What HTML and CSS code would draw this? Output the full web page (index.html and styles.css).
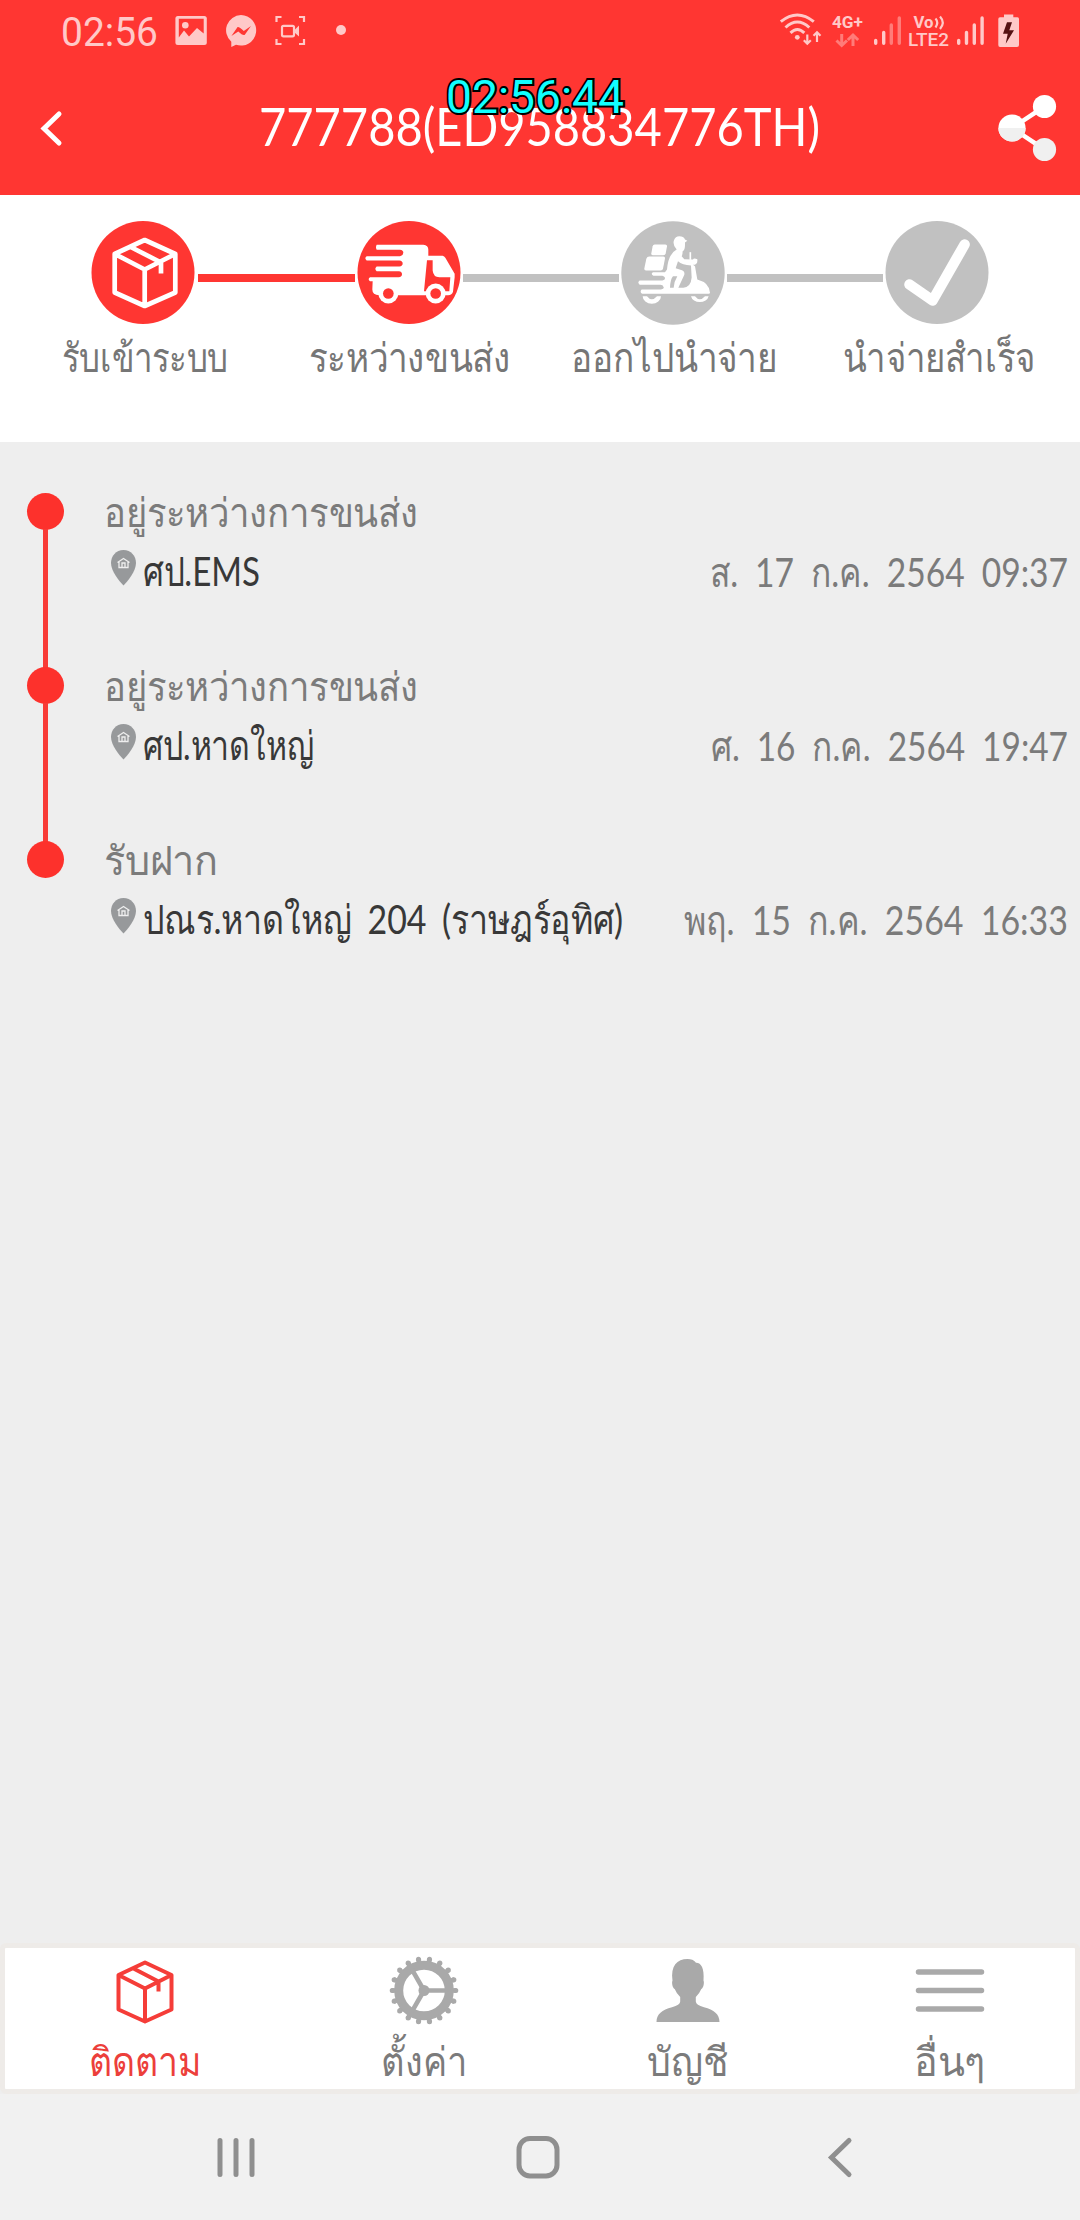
FILE: index.html
```
<!DOCTYPE html>
<html lang="th">
<head>
    <meta charset="UTF-8">
    <title>Track</title>
    <link rel="stylesheet" href="styles.css">
</head>
<body>
    <div class="statusbar">
        <svg class="time" width="97" height="34"><text x="0" y="33" textLength="97" lengthAdjust="spacingAndGlyphs">02:56</text></svg>
        <svg class="gallery" width="34" height="34">
            <rect x="1.4" y="3" width="31.4" height="29" rx="2.5"/>
            <path class="cut" d="M4.8 5.7H29.7V20.5L23 15L15 23.5L10 17.5L4.8 24.5Z"/>
            <circle cx="11.3" cy="12.3" r="3.3"/>
        </svg>
        <svg class="messenger" width="34" height="34">
            <path d="M17 2A15.3 15.3 0 1 1 12 31.8L7.3 34V28.8A15.3 15.3 0 0 1 17 2Z"/>
            <path class="cut" d="M7.4 23L13.6 14Q15 13.4 19.8 18L27 13L20.8 21.7Q19 23 14.3 18.4Z"/>
        </svg>
        <svg class="recorder" width="34" height="34">
            <path class="line2" d="M2.5 9V4H7.5M25 4H30V9M30 26V31H25M7.5 31H2.5V26"/>
            <rect class="line2" x="8" y="12.8" width="12" height="10.5" rx="1.5"/>
            <path d="M20.5 17L25 12.5V23.5L20.5 19.5Z"/>
        </svg>
        <svg class="more" width="10" height="34"><circle cx="5" cy="17" r="5"/></svg>
        <div class="status-right">
            <svg width="43" height="34">
                <path class="line3" d="M1.8 8.7Q18.3 -4.7 34.8 8.7M6.5 14.5Q18.3 3.5 30.3 14.5M11.5 19.8Q18.3 13.2 25.3 19.8"/>
                <circle cx="18.3" cy="24.3" r="2.4"/>
                <path class="line2" d="M28.3 21.5V30.5M24.8 27.3L28.3 30.8L31.8 27.3M38 29V19.5M34.5 22.8L38 19.3L41.5 22.8"/>
            </svg>
            <svg width="35" height="34">
                <text class="net" x="2" y="15" textLength="31" lengthAdjust="spacingAndGlyphs">4G+</text>
                <path class="line3 dim" d="M11.7 21V32M6.5 27.5L11.7 32.5L17 27.5M23 33V22.5M17.8 27L23 22L28.2 27"/>
            </svg>
            <svg width="28" height="34">
                <path class="bar" d="M2.7 27.5V30.3M10.7 19.5V30.3"/>
                <path class="bar dim" d="M18.3 12V30.3M26.3 5V30.3"/>
            </svg>
            <svg width="39" height="34">
                <text class="net" x="4.5" y="15.3" textLength="20" lengthAdjust="spacingAndGlyphs">Vo</text>
                <path class="line2" d="M26.5 5.5Q30 9.5 26.5 14.5M31 3.5Q36.5 9.5 31 16"/>
                <text class="net lte" x="-1" y="32.7" textLength="41" lengthAdjust="spacingAndGlyphs">LTE2</text>
            </svg>
            <svg width="28" height="34">
                <path class="bar" d="M2.7 27.5V30.3M10.5 19.5V30.3M18.3 12V30.3M26.1 5V30.3"/>
            </svg>
            <svg width="28" height="34">
                <path d="M12 1.5H21.3V4.3H25.5Q27 4.3 27 6V32Q27 34 25 34H8Q6.3 34 6.3 32V6Q6.3 4.3 8 4.3H12Z"/>
                <path class="bolt" d="M15 9.3L11 20.7H15.7L13.7 30.7L22 17.3H17.3L20 9.3Z"/>
            </svg>
        </div>
    </div>

    <div class="header">
        <svg class="back" width="26" height="40"><path d="M21 5L6 19.5L21 34"/></svg>
        <svg class="title" width="562" height="60"><text x="0" y="48" textLength="561" lengthAdjust="spacingAndGlyphs">777788(ED958834776TH)</text></svg>
        <svg class="share" width="60" height="70">
            <path class="arms" d="M46.5 13.5L14 35L46.5 56.5"/>
            <circle cx="46.5" cy="13.5" r="11.6"/>
            <circle cx="14" cy="35" r="13.6"/>
            <path class="shade" d="M.4 35A13.6 13.6 0 0 0 27.6 35Z"/>
            <circle class="shade" cx="46.5" cy="56.5" r="11.6"/>
        </svg>
    </div>
    <svg class="clock" width="184" height="48"><text x="3" y="40" textLength="178" lengthAdjust="spacingAndGlyphs">02:56:44</text></svg>

    <div class="steps">
        <div class="track">
            <svg class="step done" width="104" height="104">
                <circle cx="52" cy="51.5" r="51.5"/>
                <path class="outline" d="M53.7 19L84.3 33V71.5L53.7 85L23.7 71.5V33ZM23.7 33L53.7 48.5L84.3 33M53.7 48.5V85M40.7 26.5L70 41.5V52.5"/>
            </svg>
            <div class="line done"></div>
            <svg class="step done" width="104" height="104">
                <circle cx="52" cy="51.5" r="51.5"/>
                <g transform="translate(-7 -6.5) scale(.3333)">
                    <path class="white" d="M80 91H220Q235 92 235 106V124H278Q283 125 286 130L314 178V188L309 232Q306 243 292 242H88Q67 242 67 225L68 200H60Q52 195 60 188H146Q156 187 156 179Q156 171 147 170H80Q72 163 80 156H148Q158 155 158 147Q158 139 148 138H50Q42 131 50 125H150Q160 123 160 115Q160 107 150 106H80Q76 98 80 91Z"/>
                    <path class="fill" d="M231 137H248V168Q250 188 268 188H301L298 230H222Z"/>
                    <circle class="white" cx="115" cy="237" r="30"/><circle class="fill" cx="115" cy="237" r="16"/>
                    <circle class="white" cx="257" cy="237" r="30"/><circle class="fill" cx="257" cy="237" r="16"/>
                </g>
            </svg>
            <div class="line"></div>
            <svg class="step" width="104" height="104">
                <circle cx="52" cy="52" r="51.7"/>
                <g class="white" transform="translate(-6 -5.5) scale(.3333)">
                    <path d="M119 87H151Q157 87 156 93L152 114Q151 119 145 119H113Q108 119 109 113L113 92Q114 87 119 87Z"/>
                    <path d="M103 123H145Q151 123 150 129L144 160Q143 165 137 165H93Q87 165 88 159L94 130Q96 123 103 123Z"/>
                    <path d="M193 62Q206 62 210 72L217 76L210 81Q211 105 203 107Q203 118 200 122L208 131L234 132Q236 127 247 131Q249 148 234 148L240 152L247 192Q284 202 285 232Q285 235 281 235H82Q73 230 80 222H138Q148 220 146 215Q144 208 136 208H74Q66 201 74 195H142Q151 193 150 187Q148 182 142 181H115Q106 175 114 170H150L156 162Q160 115 185 102Q172 88 177 74Q181 62 193 62Z"/>
                    <path class="stroke" d="M226 133V110"/>
                    <path class="gap" d="M189 137Q202 148 228 150L230 186Q228 214 205 217H190L208 178Q210 168 201 164L182 158Z"/>
                    <path class="gap" d="M165 217Q166 190 174 182H187Q177 198 176 217Z"/>
                    <path d="M83 242A27 22 0 0 0 138 242H126Q110 260 96 242Z"/>
                    <path d="M228 242A27 22 0 0 0 281 242H270Q254 260 240 242Z"/>
                </g>
            </svg>
            <div class="line"></div>
            <svg class="step" width="104" height="104">
                <circle cx="52" cy="51.5" r="51.5"/>
                <path class="check" d="M24.5 63.5L47.6 79.5L79.6 23.5"/>
            </svg>
        </div>
        <div class="labels">
            <svg width="166" height="60"><text x="0" y="43" textLength="166" lengthAdjust="spacingAndGlyphs">รับเข้าระบบ</text></svg>
            <svg width="202" height="60"><text x="0" y="43" textLength="202" lengthAdjust="spacingAndGlyphs">ระหว่างขนส่ง</text></svg>
            <svg width="206" height="60"><text x="0" y="43" textLength="206" lengthAdjust="spacingAndGlyphs">ออกไปนำจ่าย</text></svg>
            <svg width="192" height="60"><text x="0" y="43" textLength="192" lengthAdjust="spacingAndGlyphs">นำจ่ายสำเร็จ</text></svg>
        </div>
    </div>

    <div class="timeline">
        <div class="event">
            <div class="rail"><div class="dot"></div><div class="stem"></div></div>
            <div class="detail">
                <svg class="status" width="316" height="50"><text x="-1" y="34" textLength="314" lengthAdjust="spacingAndGlyphs">อยู่ระหว่างการขนส่ง</text></svg>
                <div class="row">
                    <svg class="pin" width="25" height="50"><path d="M12.5 7C5 7 0 13 0 20C0 28 8 38 12.5 42.5C17 38 25 28 25 20C25 13 20 7 12.5 7Z"/><path class="house" d="M6.5 19.5L12.5 15.5L18.5 19.5M8 19V24.5H17V19M11 24V20H14V24"/></svg>
                    <svg class="place" width="117" height="50"><text x="-1" y="43" textLength="117" lengthAdjust="spacingAndGlyphs">ศป.EMS</text></svg>
                    <svg class="date" width="358" height="50"><text x="0" y="43.5" textLength="358" lengthAdjust="spacingAndGlyphs">ส. 17 ก.ค. 2564 09:37</text></svg>
                </div>
            </div>
        </div>
        <div class="event">
            <div class="rail"><div class="dot"></div><div class="stem"></div></div>
            <div class="detail">
                <svg class="status" width="316" height="50"><text x="-1" y="34" textLength="314" lengthAdjust="spacingAndGlyphs">อยู่ระหว่างการขนส่ง</text></svg>
                <div class="row">
                    <svg class="pin" width="25" height="50"><path d="M12.5 7C5 7 0 13 0 20C0 28 8 38 12.5 42.5C17 38 25 28 25 20C25 13 20 7 12.5 7Z"/><path class="house" d="M6.5 19.5L12.5 15.5L18.5 19.5M8 19V24.5H17V19M11 24V20H14V24"/></svg>
                    <svg class="place" width="171" height="50"><text x="-1" y="43" textLength="171" lengthAdjust="spacingAndGlyphs">ศป.หาดใหญ่</text></svg>
                    <svg class="date" width="357" height="50"><text x="0" y="43.5" textLength="357" lengthAdjust="spacingAndGlyphs">ศ. 16 ก.ค. 2564 19:47</text></svg>
                </div>
            </div>
        </div>
        <div class="event">
            <div class="rail"><div class="dot"></div></div>
            <div class="detail">
                <svg class="status" width="116" height="50"><text x="-1" y="34" textLength="114" lengthAdjust="spacingAndGlyphs">รับฝาก</text></svg>
                <div class="row">
                    <svg class="pin" width="25" height="50"><path d="M12.5 7C5 7 0 13 0 20C0 28 8 38 12.5 42.5C17 38 25 28 25 20C25 13 20 7 12.5 7Z"/><path class="house" d="M6.5 19.5L12.5 15.5L18.5 19.5M8 19V24.5H17V19M11 24V20H14V24"/></svg>
                    <svg class="place" width="479" height="50"><text x="-1" y="43" textLength="480" lengthAdjust="spacingAndGlyphs">ปณร.หาดใหญ่ 204 (ราษฎร์อุทิศ)</text></svg>
                    <svg class="date" width="384" height="50"><text x="0" y="43.5" textLength="384" lengthAdjust="spacingAndGlyphs">พฤ. 15 ก.ค. 2564 16:33</text></svg>
                </div>
            </div>
        </div>
    </div>

    <div class="tabs">
        <div class="tab active">
            <svg class="icon" width="72" height="72">
                <path class="outline" d="M36 8.5L62.5 21V55.5L36 67.5L9.5 55.5V21ZM9.5 21L36 34.5L62.5 21M36 34.5V67.5M24.5 14.5L49.5 27.5V37.5"/>
            </svg>
            <svg width="112" height="55"><text x="0" y="50" textLength="112" lengthAdjust="spacingAndGlyphs">ติดตาม</text></svg>
        </div>
        <div class="tab">
            <svg class="icon" width="72" height="72" viewBox="-36 -36.5 72 72">
                <circle class="ring" r="25.3"/>
                <circle class="teeth" r="30.5" pathLength="18"/>
                <circle class="tips" r="31.8" pathLength="18"/>
                <path class="spokes" d="M0 0H24M0 0L-12 -20.8M0 0L-12 20.8"/>
                <circle r="5.5"/>
            </svg>
            <svg width="86" height="55"><text x="0" y="50" textLength="86" lengthAdjust="spacingAndGlyphs">ตั้งค่า</text></svg>
        </div>
        <div class="tab account">
            <svg class="icon" width="72" height="72">
                <path d="M35.5 5C39 5 42 6 44 8.7C49 8.5 52.5 14 51.5 26.5C52.5 28.5 51.5 34 49.3 35Q47.5 39.5 43.8 43V47.5Q44 51 52 53.2C62 56 67.5 60 67.5 68H4.5C4.5 60 10 56 20 53.2Q28 51 28.2 47.5V43Q24.5 39.5 22.7 35C20.5 34 19.5 28.5 20.5 26.5C18.5 12 25 5 35.5 5Z"/>
            </svg>
            <svg width="81" height="55"><text x="0" y="50" textLength="81" lengthAdjust="spacingAndGlyphs">บัญชี</text></svg>
        </div>
        <div class="tab others">
            <svg class="icon" width="72" height="72"><path class="menu" d="M4.5 18H67.5M4.5 36.5H67.5M4.5 55H67.5"/></svg>
            <svg width="71" height="55"><text x="0" y="50" textLength="71" lengthAdjust="spacingAndGlyphs">อื่นๆ</text></svg>
        </div>
    </div>

    <div class="navbar">
        <svg class="recents" width="40" height="46"><path d="M4 6.5V40.5M20 6.5V40.5M36 6.5V40.5"/></svg>
        <svg class="home" width="46" height="46"><rect x="4" y="4.500" width="38" height="37.5" rx="11"/></svg>
        <svg class="prev" width="30" height="46"><path d="M24 6.5L6.5 23.5L24 40.5"/></svg>
    </div>
</body>
</html>
```
FILE: styles.css
```
* {
    box-sizing: border-box;
}

body {
    margin: 0;
    width: 1080px;
    height: 2220px;
    display: flex;
    flex-direction: column;
    position: relative;
    background: #eee;
    overflow: hidden;
    font-family: Lato, "Noto Sans", sans-serif;
    font-size: 40px;
}

svg {
    display: block;
    flex: none;
    overflow: visible;
}

/* status bar */
.statusbar {
    display: flex;
    height: 60px;
    padding: 13px 60px 0 61px;
    background: #ff3632;
    fill: #ffc9c8;
    font-family: Roboto, sans-serif;
}

.gallery,
.messenger,
.recorder {
    margin-left: 16px;
}

.more {
    margin-left: 28px;
}

.status-right {
    display: flex;
    gap: 8px;
    margin-left: auto;
}

.cut {
    fill: #ff3632;
}

.line2 {
    fill: none;
    stroke: #ffc9c8;
    stroke-width: 2.2;
}

.line3 {
    fill: none;
    stroke: #ffc9c8;
    stroke-width: 3;
}

.bar {
    fill: none;
    stroke: #ffc9c8;
    stroke-width: 3.4;
    stroke-linecap: round;
}

.dim {
    stroke: #ff7c79;
}

.net {
    font-size: 16.5px;
    font-weight: 700;
}

.lte {
    font-size: 18px;
    font-weight: 500;
}

.bolt {
    fill: #551112;
}

/* header */
.header {
    display: flex;
    align-items: flex-start;
    height: 135px;
    padding: 33px 22px 0 38px;
    background: #ff3632;
    fill: #fff;
}

.back {
    margin-top: 16px;
    fill: none;
    stroke: #fff;
    stroke-width: 5;
    stroke-linecap: round;
}

.title {
    margin-top: 5px;
    margin-left: 195px;
    font-size: 53px;
}

.share {
    margin-left: auto;
}

.arms {
    fill: none;
    stroke: #fff;
    stroke-width: 4.5;
}

.shade {
    fill: #f0f0f0;
}

.clock {
    position: absolute;
    left: 443px;
    top: 73px;
    font-family: Roboto, sans-serif;
    font-size: 47px;
    font-weight: 400;
    fill: #1ff;
    stroke: #000;
    stroke-width: 4px;
    paint-order: stroke;
}

/* delivery steps */
.steps {
    height: 247px;
    padding-top: 26px;
    background: #fff;
}

.track {
    display: flex;
    align-items: center;
    padding-left: 91px;
}

.step {
    fill: #c1c1c1;
}

.step.done,
.step.done .fill {
    fill: #ff3632;
}

.step .white {
    fill: #fff;
}

.step .gap {
    fill: #c1c1c1;
}

.step .stroke {
    stroke: #fff;
    stroke-width: 5;
}

.step .outline {
    fill: none;
    stroke: #fff;
    stroke-width: 4.7;
    stroke-linejoin: round;
}

.check {
    fill: none;
    stroke: #fff;
    stroke-width: 10.5;
    stroke-linecap: round;
    stroke-linejoin: round;
}

.line {
    width: 156px;
    height: 8px;
    margin: 10px 2px 0;
    background: #c1c1c1;
}

.line.done {
    width: 157px;
    margin-left: 3px;
    background: #ff3632;
}

.labels {
    display: grid;
    grid-template-columns: repeat(4, 264.5px);
    justify-items: center;
    padding: 4px 0 0 13px;
    fill: #767676;
}

/* timeline */
.timeline {
    flex: 1;
    padding-top: 51px;
}

.event {
    display: flex;
    height: 174px;
}

.rail {
    display: flex;
    flex-direction: column;
    align-items: center;
    width: 37px;
    margin: 0 41px 0 27px;
}

.dot {
    width: 37px;
    height: 37px;
    border-radius: 50%;
    background: #fd312c;
}

.stem {
    flex: 1;
    width: 5px;
    margin: -1px 0;
    background: #f83b36;
}

.detail {
    flex: 1;
    padding-right: 12px;
}

.status {
    fill: #7b7b7b;
}

.row {
    display: flex;
    padding-left: 6px;
}

.pin {
    fill: #97999b;
}

.house {
    fill: none;
    stroke: #eee;
    stroke-width: 1.3;
}

.place {
    margin-left: 8px;
    fill: #383838;
    word-spacing: 8px;
}

.date {
    margin-left: auto;
    fill: #7b7b7b;
    word-spacing: 10px;
}

/* bottom tabs */
.tabs {
    display: flex;
    height: 151px;
    border: 5px solid #eeebe8;
    border-radius: 6px;
    background: #fff;
}

.tab {
    display: flex;
    flex-direction: column;
    align-items: center;
    width: 279px;
    padding-top: 6px;
    fill: #7b7b7b;
}

.tab.account {
    width: 249px;
}

.tab.others {
    width: 263px;
    padding-left: 12px;
}

.tab.active {
    fill: #ec3f3b;
}

.icon {
    fill: #a9a9a9;
}

.tab .outline {
    fill: none;
    stroke: #f53d38;
    stroke-width: 4;
    stroke-linejoin: round;
}

.ring {
    fill: none;
    stroke: #a9a9a9;
    stroke-width: 9;
}

.teeth {
    fill: none;
    stroke: #a9a9a9;
    stroke-width: 4;
    stroke-dasharray: .46 .54;
    stroke-dashoffset: .23;
}

.tips {
    fill: none;
    stroke: #a9a9a9;
    stroke-width: 5;
    stroke-linecap: round;
    stroke-dasharray: 0 1;
}

.spokes {
    stroke: #a9a9a9;
    stroke-width: 4.6;
}

.menu {
    stroke: #a9a9a9;
    stroke-width: 5.5;
    stroke-linecap: round;
}

/* system navigation */
.navbar {
    display: flex;
    height: 126px;
    padding-top: 40px;
    background: #f1f1f1;
    fill: none;
    stroke: #8f8f8f;
    stroke-width: 5;
    stroke-linecap: round;
}

.recents {
    margin-left: 216px;
}

.home {
    margin-left: 259px;
}

.prev {
    margin-left: 264px;
}
```
